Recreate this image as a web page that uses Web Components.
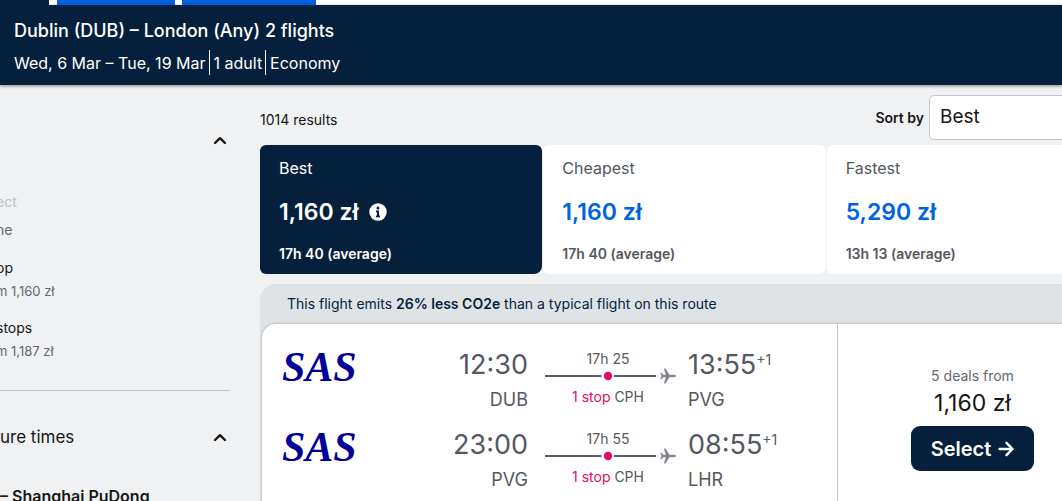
<!DOCTYPE html>
<html lang="en">
<head>
<meta charset="utf-8">
<title>Dublin to London flights</title>
<style>
html, body { margin: 0; }
body {
  min-height: 100vh;
  overflow: hidden;
  background: #eff1f2;
  color: #161616;
  font-family: Inter, "Liberation Sans", sans-serif;
  font-size: 14px;
  --navy: #05203c;
  --blue: #0062e3;
  --grey: #545860;
  --line: #c1c7cf;
  --pink: #e70866;
}
</style>
</head>
<body>
<flight-page></flight-page>
<script>
function define(name, html) {
  const template = document.createElement('template');
  template.innerHTML = html;
  customElements.define(name, class extends HTMLElement {
    constructor() {
      super();
      this.attachShadow({ mode: 'open' }).append(template.content.cloneNode(true));
    }
  });
}

define('product-tabs', `
<style>
:host { display: flex; height: 5px; background: #fff; }
i { background: var(--blue); }
i:nth-of-type(1) { width: 49px; margin-right: 8px; background: var(--navy); }
i:nth-of-type(2) { width: 118px; margin-right: 7px; }
i:nth-of-type(3) { width: 134px; }
</style>
<i></i><i></i><i></i>`);

define('search-summary', `
<style>
:host { display: block; padding: 12px 14px 10px; background: var(--navy); color: #fff; box-shadow: 0 1px 3px #25201f80; position: relative; }
h1 { margin: 0 0 5px; font-size: 18px; line-height: 28px; font-weight: 500; }
div { display: flex; font-size: 16px; line-height: 26px; height: 25px; font-weight: 400; }
</style>
<h1><slot name="route"></slot></h1>
<div><slot></slot></div>`);

define('summary-part', `
<style>
:host { display: block; padding-right: 3px; margin-right: 4px; border-right: 1px solid #fff; }
:host(:last-child) { border: 0; }
</style>
<slot></slot>`);

define('chevron-up', `
<style>:host { display: block; width: 14px; height: 9px; } svg { display: block; }</style>
<svg width="14" height="9" viewBox="0 0 14 9" fill="none" stroke="#161616" stroke-width="2.4" stroke-linecap="round" stroke-linejoin="round" aria-hidden="true"><path d="M2 7 7 2.2 12 7"/></svg>`);

define('filter-section', `
<style>
:host { display: block; padding-top: 23px; border-bottom: 1px solid #bcc6cb; }
button { display: flex; align-items: center; justify-content: space-between; width: 100%; height: 46px; padding: 0 3px 0 0; border: 0; background: none; color: inherit; font: 400 17px Inter, sans-serif; text-align: left; }
</style>
<button type="button" aria-label="Toggle section"><span><slot name="title"></slot></span><chevron-up></chevron-up></button>
<slot></slot>`);

define('filter-option', `
<style>
:host { display: block; line-height: 22px; font-size: 14px; }
span { display: block; }
.note { color: #626971; font-size: 13px; line-height: 24px; margin-bottom: 14px; }
:host([disabled]) { color: #bdc3c9; line-height: 28px; }
:host([disabled]) .note { font-size: 14px; line-height: 28px; margin: 0; }
</style>
<span><slot></slot></span><span class="note"><slot name="note"></slot></span>`);

define('sort-option', `
<style>
:host { display: block; box-sizing: border-box; padding: 10px 19px; background: #fff; border-radius: 6px 6px 8px 6px; color: var(--grey); }
.label { font-size: 16px; line-height: 26px; }
.price { display: flex; align-items: center; gap: 11px; margin: 15px 0 16px; font-size: 23px; line-height: 32px; font-weight: 600; color: var(--blue); }
.time { font-size: 14px; line-height: 20px; font-weight: 600; }
svg { display: none; }
:host([selected]) { background: var(--navy); color: #fff; }
:host([selected]) .price { color: #fff; }
:host([selected]) svg { display: block; }
</style>
<div class="label"><slot></slot></div>
<div class="price"><slot name="price"></slot><svg width="18" height="18" viewBox="0 0 18 18" role="img" aria-label="Information"><circle cx="9" cy="9" r="8.7" fill="#fff"/><circle cx="9" cy="5.1" r="1.5" fill="#05203c"/><path d="M7 7.6h3v5h1v1.6H7v-1.6h1V9.2H7z" fill="#05203c"/></svg></div>
<div class="time"><slot name="time"></slot></div>`);

define('flight-leg', `
<style>
:host { display: grid; grid-template-columns: minmax(0, 1fr) 110px 132px 161px; height: 80px; color: var(--grey); }
.logo { color: #000099; font: italic 700 42px/40px "Liberation Serif", serif; }
.from { text-align: right; padding-right: 16px; }
.to { padding-left: 12px; }
.time { font-size: 27px; line-height: 36px; }
.port { font-size: 18px; line-height: 34px; }
.to .time { display: flex; }
small { font-size: 14px; line-height: 26px; }
.via { padding-top: 1px; font-size: 14px; line-height: 22px; text-align: center; }
.via p { margin: 0; padding-right: 4px; }
.via svg { display: block; width: 100%; height: 12px; margin-bottom: 4px; overflow: visible; }
b { color: var(--pink); font-weight: 400; }
</style>
<div class="logo"><slot name="airline"></slot></div>
<div class="from"><div class="time"><slot name="depart"></slot></div><div class="port"><slot name="origin"></slot></div></div>
<div class="via"><p><slot name="duration"></slot></p>
<svg viewBox="0 2 132 12" aria-hidden="true"><path d="M1 8h56.500M70 8h42" stroke="#545860" stroke-width="2"/><circle cx="64" cy="8" r="4.200" fill="#e70866"/><path d="M132 8c0 .7-1 1.200-2.400 1.200h-4.200l-3.800 6.300h-1.700l2-6.300h-2.700l-1.500 2h-1.200L117.400 8l-.9-3.200h1.200l1.500 2h2.700l-2-6.300h1.700l3.800 6.300h4.200c1.400 0 2.400.5 2.400 1.200z" fill="#898294"/></svg>
<p><b><slot name="stops"></slot></b> <slot name="via"></slot></p></div>
<div class="to"><div class="time"><slot name="arrive"></slot><small>+1</small></div><div class="port"><slot name="destination"></slot></div></div>`);

define('deal-panel', `
<style>
:host { display: flex; flex-direction: column; align-items: center; box-sizing: border-box; width: 270px; padding-top: 42px; border-left: 1px solid var(--line); }
.deals { font-size: 14px; line-height: 20px; color: #626971; }
.price { font-size: 23px; line-height: 34px; margin-bottom: 6px; }
button { display: flex; align-items: center; gap: 7px; height: 45px; padding: 0 20px; border: 0; border-radius: 9px; background: var(--navy); color: #fff; font: 600 20px Inter, sans-serif; }
</style>
<div class="deals"><slot name="deals"></slot></div>
<div class="price"><slot name="price"></slot></div>
<button type="button"><slot></slot><svg width="16" height="16" viewBox="0 0 16 16" fill="none" stroke="#fff" stroke-width="2.400" stroke-linecap="round" stroke-linejoin="round" aria-hidden="true"><path d="M1.500 8h13M8.500 1.800 14.500 8l-6 6.200"/></svg></button>`);

define('flight-ticket', `
<style>
:host { display: block; padding: 0 2px; background: #dfe3e6; border-radius: 16px 16px 0 0; }
.eco { padding: 0 25px; font-size: 14px; line-height: 40px; color: var(--navy); }
.card { display: flex; background: #fff; border-radius: 14px 14px 0 0; box-shadow: 0 0 3px #25201f55; }
.legs { flex: 1; min-width: 0; padding: 23px 0 20px 20px; }
</style>
<div class="eco"><slot name="eco"></slot></div>
<div class="card"><div class="legs"><slot></slot></div><slot name="deal"></slot></div>`);

define('result-bar', `
<style>
:host { display: flex; align-items: center; justify-content: space-between; height: 45px; margin-bottom: 5px; }
.count { padding-top: 4px; }
.sort { display: flex; align-items: center; gap: 5px; }
label { font-weight: 600; }
select { appearance: none; box-sizing: border-box; width: 180px; height: 45px; padding: 0 10px 2px; border: 1px solid var(--line); border-radius: 5px; background: #fff; color: #161616; font: 400 19px Inter, sans-serif; }
</style>
<span class="count"><slot></slot></span>
<div class="sort"><label for="sort">Sort by</label><select id="sort"><option>Best</option></select></div>`);

define('flight-page', `
<style>
:host { display: block; }
main { display: grid; grid-template-columns: 230px minmax(0, 1fr); gap: 30px; margin-right: -47px; }
aside { padding-top: 9px; }
.options { display: block; margin-left: -4px; padding: 25px 0 13px; }
.gap { height: 13px; }
.leg { margin: 24px 0 0; font-size: 16px; line-height: 24px; font-weight: 600; }
.results { padding-top: 10px; }
.tabs { display: grid; grid-template-columns: repeat(3, minmax(0, 1fr)); gap: 1px; margin-bottom: 10px; }
strong { font-weight: 600; }
</style>
<product-tabs></product-tabs>
<search-summary><span slot="route">Dublin (DUB) – London (Any) 2 flights</span><summary-part>Wed, 6 Mar – Tue, 19 Mar</summary-part><summary-part>1 adult</summary-part><summary-part>Economy</summary-part></search-summary>
<main>
<aside>
<filter-section>
<div class="options">
<filter-option disabled>ect<span slot="note">ne</span></filter-option>
<div class="gap"></div>
<filter-option>op<span slot="note">m 1,160 zł</span></filter-option>
<filter-option>stops<span slot="note">m 1,187 zł</span></filter-option>
</div>
</filter-section>
<filter-section><span slot="title">ure times</span><p class="leg">– Shanghai PuDong</p></filter-section>
</aside>
<div class="results">
<result-bar>1014 results</result-bar>
<div class="tabs">
<sort-option selected>Best<span slot="price">1,160 zł</span><span slot="time">17h 40 (average)</span></sort-option>
<sort-option>Cheapest<span slot="price">1,160 zł</span><span slot="time">17h 40 (average)</span></sort-option>
<sort-option>Fastest<span slot="price">5,290 zł</span><span slot="time">13h 13 (average)</span></sort-option>
</div>
<flight-ticket>
<span slot="eco">This flight emits <strong>26% less CO2e</strong> than a typical flight on this route</span>
<flight-leg><span slot="airline">SAS</span><span slot="depart">12:30</span><span slot="origin">DUB</span><span slot="duration">17h 25</span><span slot="stops">1 stop</span><span slot="via">CPH</span><span slot="arrive">13:55</span><span slot="destination">PVG</span></flight-leg>
<flight-leg><span slot="airline">SAS</span><span slot="depart">23:00</span><span slot="origin">PVG</span><span slot="duration">17h 55</span><span slot="stops">1 stop</span><span slot="via">CPH</span><span slot="arrive">08:55</span><span slot="destination">LHR</span></flight-leg>
<deal-panel slot="deal"><span slot="deals">5 deals from</span><span slot="price">1,160 zł</span>Select</deal-panel>
</flight-ticket>
</div>
</main>`);
</script>
</body>
</html>
